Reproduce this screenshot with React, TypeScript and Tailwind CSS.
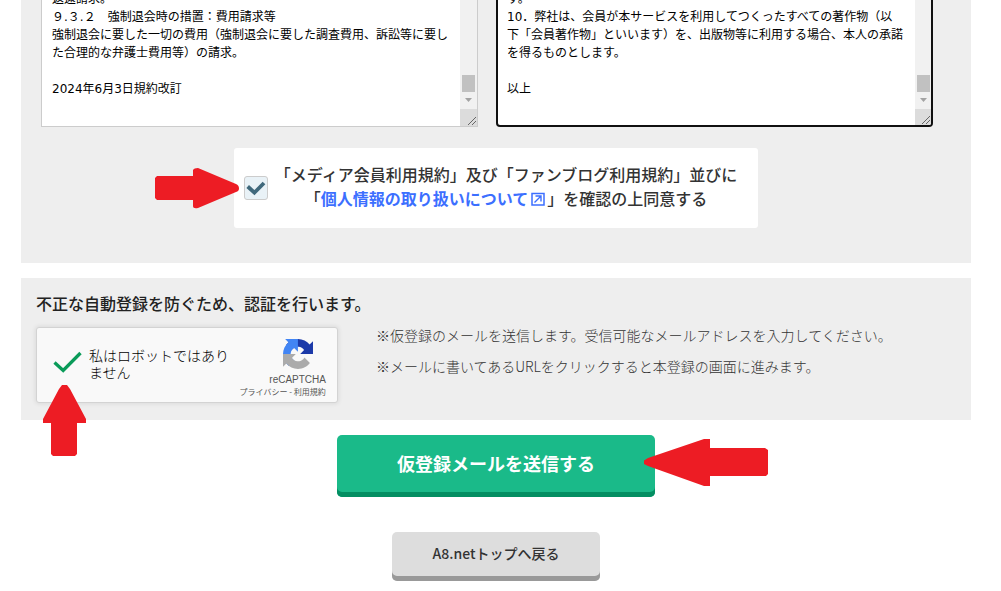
import { useEffect, useRef } from "react";

const MEDIA_TERMS = `返還請求。
９.３.２　強制退会時の措置：費用請求等
強制退会に要した一切の費用（強制退会に要した調査費用、訴訟等に要した合理的な弁護士費用等）の請求。

2024年6月3日規約改訂
`;

const BLOG_TERMS = `す。
10．弊社は、会員が本サービスを利用してつくったすべての著作物（以下「会員著作物」といいます）を、出版物等に利用する場合、本人の承諾を得るものとします。

以上
`;

export default function App() {
  return (
    <main className="overflow-hidden bg-white pr-[30px] pl-[21px] font-['Noto_Sans_CJK_JP',sans-serif] text-[#333]">
      {/* Terms */}
      <section className="bg-[#eee] pr-[38px] pb-[35px] pl-5">
        <div className="grid grid-cols-2 gap-[18px]">
          <TermsBox label="メディア会員利用規約" text={MEDIA_TERMS} />
          <TermsBox label="ファンブログ利用規約" text={BLOG_TERMS} focused />
        </div>

        <div className="mt-[21px] flex justify-center pl-[18px]">
          <div className="relative flex h-20 w-[524px] items-center rounded-[3px] bg-white pl-[10px]">
            <div className="relative size-6 shrink-0">
              <input
                id="agree"
                type="checkbox"
                defaultChecked
                className="block size-6 appearance-none rounded-[3px] border border-[#ccc] bg-[#e9f2f7]"
              />
              <svg viewBox="0 0 24 24" className="pointer-events-none absolute inset-0 size-6" fill="none">
                <path d="M3.7 10.5 10.4 16.7 20 7" stroke="#40697c" strokeWidth="3.8" />
              </svg>
            </div>
            <label htmlFor="agree" className="flex-1 pr-[14px] pb-1 text-center text-base leading-6 font-medium">
              「メディア会員利用規約」及び「ファンブログ利用規約」並びに
              <br />「
              <a href="#privacy" className="font-bold text-[#3c6fff]">
                個人情報の取り扱いについて
                <ExternalIcon />
              </a>
              」を確認の上同意する
            </label>
            <ArrowRight />
          </div>
        </div>
      </section>

      {/* Verification */}
      <section className="mt-[15px] bg-[#eee] px-[15px] pt-[13px] pb-[17px]">
        <h2 className="text-base leading-6 font-medium text-[#222]">不正な自動登録を防ぐため、認証を行います。</h2>
        <div className="mt-3 flex gap-[38px]">
          <Recaptcha />
          <div className="-mt-[7px] text-sm leading-[31px] font-light">
            <p>※仮登録のメールを送信します。受信可能なメールアドレスを入力してください。</p>
            <p>※メールに書いてあるURLをクリックすると本登録の画面に進みます。</p>
          </div>
        </div>
      </section>

      {/* Actions */}
      <div className="mt-[15px] flex flex-col items-center gap-[35px] pb-[10px]">
        <div className="relative">
          <button
            type="submit"
            className="block h-[62px] w-[318px] rounded-[5px] bg-[#1aba89] pb-[7px] text-lg font-bold text-white shadow-[inset_0_-5px_0_#048e62]"
          >
            仮登録メールを送信する
          </button>
          <ArrowLeft />
        </div>
        <a
          href="#top"
          className="flex h-[49px] w-[208px] items-center justify-center rounded-[5px] bg-[#ddd] pb-[7px] text-sm font-medium shadow-[inset_0_-5px_0_#999]"
        >
          A8.netトップへ戻る
        </a>
      </div>
    </main>
  );
}

function TermsBox({ label, text, focused }: { label: string; text: string; focused?: boolean }) {
  const ref = useRef<HTMLTextAreaElement>(null);

  // Open at the end of the terms
  useEffect(() => {
    if (ref.current) ref.current.scrollTop = ref.current.scrollHeight;
  }, []);

  return (
    <div
      className={`flex h-[127px] min-w-0 overflow-hidden bg-white ${
        focused ? "rounded-b-[4px] border-2 border-t-0 border-[#101010]" : "border border-t-0 border-[#ccc]"
      }`}
    >
      <textarea
        ref={ref}
        aria-label={label}
        readOnly
        defaultValue={text}
        className={`block h-full min-w-0 flex-1 resize-none overflow-hidden pt-0 font-['DejaVu_Sans','Noto_Sans_CJK_JP',sans-serif] text-xs leading-[18px] text-black outline-none ${
          focused ? "pr-3 pb-[9px] pl-[9px]" : "pr-[10px] pb-[10px] pl-[10px]"
        }`}
      />
      <div className={`flex shrink-0 flex-col items-center bg-[#f1f1f1] ${focused ? "w-4" : "w-[17px]"}`}>
        <div className="mt-[75px] h-[17px] w-[13px] bg-[#c1c1c1]" />
        <svg viewBox="0 0 13 17" className="h-[17px] w-[13px]">
          <path d="M3 6h7L6.500 10z" fill="#a3a3a3" />
        </svg>
        <div className="flex w-full flex-1 items-end justify-end bg-[#dcdcdc]">
          <svg viewBox="0 0 10 10" className="size-[10px]" stroke="#666" fill="none">
            <path d="M1 9 9 1M5 9 9 5" />
          </svg>
        </div>
      </div>
    </div>
  );
}

function Recaptcha() {
  return (
    <div className="relative flex h-[76px] w-[302px] shrink-0 justify-between rounded-[3px] border border-[#d3d3d3] bg-[#f9f9f9] shadow-[0_0_4px_1px_rgba(0,0,0,0.08)]">
      <div className="flex items-center pb-[2px]">
        <div className="relative ml-[15px] size-8 shrink-0">
          <input id="robot" type="checkbox" defaultChecked className="block size-8 appearance-none" />
          <svg viewBox="0 0 32 32" className="pointer-events-none absolute inset-0 size-8" fill="none">
            <path d="M2.500 14.500 11.200 22.500 28.500 5" stroke="#0a9b59" strokeWidth="3.300" />
          </svg>
        </div>
        <label htmlFor="robot" className="ml-[5px] w-[142px] text-sm leading-[17px] font-light text-black">
          私はロボットではありません
        </label>
      </div>
      <div className="flex flex-col items-center pt-[11px] pr-[11px]">
        <svg viewBox="0 0 64 64" className="ml-[30px] size-[30px]">
          <path
            d="M64 31.955l-.033-1.370V4.687l-7.160 7.160C50.948 4.674 42.033.093 32.050.093c-10.400 0-19.622 4.960-25.458 12.640l11.736 11.860a15.550 15.550 0 0 1 4.754-5.334c2.050-1.600 4.952-2.906 8.968-2.906.485 0 .860.057 1.135.163 4.976.393 9.288 3.140 11.828 7.124l-8.307 8.307L64 31.953"
            fill="#1c3aa9"
          />
          <path
            d="M31.862.094l-1.370.033H4.594l7.160 7.160C4.580 13.147 0 22.060 0 32.046c0 10.400 4.960 19.622 12.640 25.458L24.500 45.768a15.550 15.550 0 0 1-5.334-4.754c-1.600-2.050-2.906-4.952-2.906-8.968 0-.485.057-.860.163-1.135.393-4.976 3.140-9.288 7.124-11.828l8.307 8.307L31.860.095"
            fill="#4285f4"
          />
          <path
            d="M.001 32.045l.033 1.370v25.898l7.160-7.160c5.860 7.173 14.774 11.754 24.760 11.754 10.400 0 19.622-4.960 25.458-12.640l-11.736-11.860a15.550 15.550 0 0 1-4.754 5.334c-2.050 1.600-4.952 2.906-8.968 2.906-.485 0-.860-.057-1.135-.163-4.976-.393-9.288-3.140-11.828-7.124l8.307-8.307c-10.522.040-22.400.066-27.295-.005"
            fill="#ababab"
          />
        </svg>
        <div className="mt-[5px] ml-[30px] font-['Liberation_Sans',sans-serif] text-[10px] leading-3 text-[#555]">
          reCAPTCHA
        </div>
        <div className="text-[8px] leading-3 whitespace-nowrap text-[#555]">
          <a href="#google-privacy">プライバシー</a> - <a href="#google-terms">利用規約</a>
        </div>
      </div>
      <ArrowUp />
    </div>
  );
}

function ExternalIcon() {
  return (
    <svg viewBox="0 0 19 14" className="inline-block h-[14px] w-[19px] align-[-1px]" fill="none" stroke="currentColor">
      <path d="M4 1.500h12v11.500H4z" strokeWidth="1.500" />
      <path d="M6.500 10.500 13 4M7.500 4H13v5.500" strokeWidth="1.400" />
    </svg>
  );
}

function ArrowRight() {
  return (
    <svg viewBox="0 0 84 41" className="absolute top-5 -left-[79px] h-[41px] w-[84px]" fill="#ed1c24">
      <path d="M2 8H38V2Q39 0 43 0L81 16Q84 17 84 20.500Q84 23 81 24L43 40Q38 41 38 38V32H2L0 30V10Z" />
    </svg>
  );
}

function ArrowUp() {
  return (
    <svg viewBox="0 0 43 71" className="absolute top-[57px] left-[6px] h-[71px] w-[43px]" fill="#ed1c24">
      <path d="M19 0H24L27 4 43 34V38H34V69L32 71H10L8 69V38H0V34L16 4Z" />
    </svg>
  );
}

function ArrowLeft() {
  return (
    <svg viewBox="0 0 124 48" className="absolute top-1 -right-[113px] h-[48px] w-[124px]" fill="#ed1c24">
      <path d="M0 21.500 4 19 60 0H66V9H121L124 11V35L122 37H66V47H60L4 27 0 25Z" />
    </svg>
  );
}
